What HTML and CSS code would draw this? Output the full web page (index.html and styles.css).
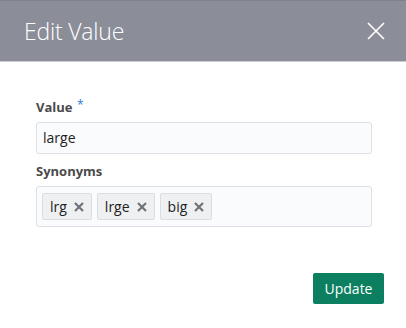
FILE: index.html
```html
<!DOCTYPE html>
<html lang="en">
<head>
    <meta charset="UTF-8">
    <meta name="viewport" content="width=device-width, initial-scale=1.0">
    <title>Edit Value</title>
    <link rel="stylesheet" href="styles.css">
</head>
<body>
    <div class="dialog">
        <div class="dialog-header">
            <h1>Edit Value</h1>
            <button class="close-btn" aria-label="Close">
                <svg width="18" height="18" viewBox="0 0 18 18">
                    <path d="M1 1 L17 17 M17 1 L1 17" stroke="#fff" stroke-width="1.6" fill="none"/>
                </svg>
            </button>
        </div>

        <div class="dialog-body">
            <label class="field-label">Value <span class="required">*</span></label>
            <div class="text-input">large</div>

            <label class="field-label">Synonyms</label>
            <div class="chip-input">
                <span class="chip">lrg <svg class="chip-x" width="10" height="10" viewBox="0 0 10 10"><path d="M1 1 L9 9 M9 1 L1 9"/></svg></span>
                <span class="chip">lrge <svg class="chip-x" width="10" height="10" viewBox="0 0 10 10"><path d="M1 1 L9 9 M9 1 L1 9"/></svg></span>
                <span class="chip">big <svg class="chip-x" width="10" height="10" viewBox="0 0 10 10"><path d="M1 1 L9 9 M9 1 L1 9"/></svg></span>
            </div>
        </div>

        <div class="dialog-footer">
            <button class="btn-update">Update</button>
        </div>
    </div>
</body>
</html>
```

FILE: styles.css
```css
body {
    margin: 0;
    padding: 0;
    font-family: "Open Sans", "Noto Sans", Arial, sans-serif;
    background: #fff;
    color: #333;
}
.dialog {
    width: 406px;
    height: 328px;
    background: #fff;
}
.dialog-header {
    display: flex;
    align-items: center;
    justify-content: space-between;
    height: 62px;
    padding: 0 21px 0 24px;
    background-color: #8b8e99;
    border-top: 1px solid #7f828c;
    border-bottom: 1px solid #c8ccd3;
    box-sizing: border-box;
}
.dialog-header h1 {
    margin: 0;
    font-size: 23px;
    font-weight: 300;
    color: #fff;
    letter-spacing: -0.2px;
}
.close-btn {
    background: none;
    border: none;
    padding: 0;
    display: flex;
    cursor: pointer;
}
.dialog-body {
    padding: 34px 34px 0 36px;
    display: flex;
    flex-direction: column;
}
.field-label {
    font-size: 13px;
    font-weight: 700;
    color: #4a4a4a;
    line-height: 18px;
    margin-bottom: 6px;
}
.required {
    color: #2a7bd6;
    font-weight: 400;
    vertical-align: 3px;
    font-size: 12px;
    margin-left: 1px;
}
.text-input {
    height: 32px;
    box-sizing: border-box;
    border: 1px solid #dde1e6;
    border-radius: 3px;
    background: #f9fbfd;
    padding: 0 6px;
    font-size: 14px;
    line-height: 30px;
    color: #222;
    margin-bottom: 8px;
}
.chip-input {
    display: flex;
    gap: 5px;
    height: 41px;
    box-sizing: border-box;
    border: 1px solid #dde1e6;
    border-radius: 3px;
    background: #f9fbfd;
    padding: 6px 5px;
}
.chip {
    display: flex;
    align-items: center;
    gap: 7px;
    height: 27px;
    box-sizing: border-box;
    padding: 0 7px;
    background: #eef0f2;
    border: 1px solid #dadde1;
    border-radius: 2px;
    font-size: 14px;
    color: #222;
}
.chip-x {
    stroke: #6f737a;
    stroke-width: 2.2;
    fill: none;
}
.dialog-footer {
    display: flex;
    justify-content: flex-end;
    padding: 46px 22px 0 0;
}
.btn-update {
    width: 71px;
    height: 31px;
    border: none;
    border-radius: 2px;
    background-color: #0b7f5f;
    color: #fff;
    font-family: "Open Sans", "Noto Sans", Arial, sans-serif;
    font-size: 14px;
    cursor: pointer;
}
```
